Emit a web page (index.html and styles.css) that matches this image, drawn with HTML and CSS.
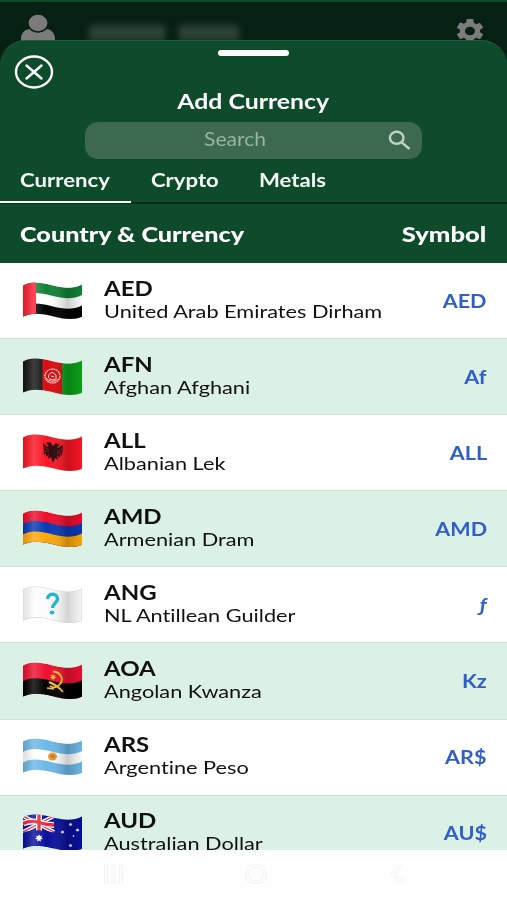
FILE: index.html
```html
<!DOCTYPE html>
<html lang="en">
<head>
  <meta charset="UTF-8" />
  <meta name="viewport" content="width=device-width, initial-scale=1.0"/>
  <title>Add Currency</title>
  <link rel="stylesheet" href="styles.css">
</head>
<body>
  <!-- shared flag shapes -->
  <svg class="defs" width="0" height="0">
    <defs>
      <path id="wave" d="M-1 4 L0 3.5 C7 -1 17 0 29 3.2 S50 7 59 2.5 V60 H-1 Z"/>
      <clipPath id="flag">
        <path d="M0 3.5 C7 -1 17 0 29 3.2 S50 7 59 2.5 V34.8 C50 38.5 41 37 29 34 S7 30.5 0 34.6 Z"/>
      </clipPath>
      <linearGradient id="shade">
        <stop offset="0" stop-color="#000" stop-opacity=".12"/>
        <stop offset=".18" stop-color="#fff" stop-opacity=".18"/>
        <stop offset=".4" stop-color="#fff" stop-opacity="0"/>
        <stop offset=".75" stop-color="#000" stop-opacity=".2"/>
        <stop offset="1" stop-color="#000" stop-opacity=".02"/>
      </linearGradient>
      <path id="star" d="M0 -4 L.9 -1.7 3.2 -2.5 2.1 -.4 4 1 1.6 1.3 1.7 3.7 0 2.2 -1.7 3.7 -1.6 1.3 -4 1 -2.1 -.4 -3.2 -2.5 -.9 -1.7 Z"/>
    </defs>
  </svg>

  <div class="phone">
    <header class="topbar">
      <svg class="user" viewBox="0 0 34 28" width="34" height="28">
        <path d="M0 28 V24 C0 18 4 14 9 14 C13 18 21 18 25 14 C30 14 34 18 34 24 V28 Z"/>
        <ellipse cx="17" cy="8" rx="10.2" ry="9" stroke="#062014" stroke-width="1.6"/>
      </svg>
      <div class="username"><i></i><i></i></div>
      <svg class="gear" viewBox="2 2 20 20" width="28" height="24" preserveAspectRatio="none">
        <path d="M19.14 12.94c.04-.3.06-.61.06-.94s-.02-.64-.07-.94l2.03-1.58a.49.49 0 0 0 .12-.61l-1.92-3.32a.49.49 0 0 0-.59-.22l-2.39.96a7 7 0 0 0-1.62-.94l-.36-2.54A.48.48 0 0 0 13.92 2h-3.84a.48.48 0 0 0-.47.41l-.36 2.54c-.59.24-1.13.57-1.62.94l-2.39-.96a.48.48 0 0 0-.59.22L2.74 8.87a.48.48 0 0 0 .12.61l2.03 1.58c-.05.3-.09.63-.09.94s.02.64.07.94l-2.03 1.58a.49.49 0 0 0-.12.61l1.92 3.32c.12.22.37.29.59.22l2.39-.96c.5.38 1.03.7 1.62.94l.36 2.54c.05.24.24.41.48.41h3.84c.24 0 .44-.17.47-.41l.36-2.54c.59-.24 1.13-.56 1.62-.94l2.39.96c.22.08.47 0 .59-.22l1.92-3.32a.48.48 0 0 0-.12-.61zM12 15.6a3.6 3.6 0 1 1 0-7.2 3.6 3.6 0 0 1 0 7.2z"/>
      </svg>
    </header>

    <main class="sheet">
      <div class="handle"></div>
      <svg class="close" viewBox="0 0 40 34" width="40" height="34">
        <ellipse cx="20" cy="17" rx="18" ry="15.5"/>
        <path d="M12.5 10.5 L27.5 23.5 M27.5 10.5 L12.5 23.5"/>
      </svg>
      <h1><span>Add Currency</span></h1>

      <div class="search">
        <span class="placeholder">Search</span>
        <svg viewBox="0 0 24 21" width="24" height="21">
          <ellipse cx="8.7" cy="7.8" rx="6.8" ry="6"/>
          <path d="M13.7 12.3 L21.5 19"/>
        </svg>
      </div>

      <nav class="tabs">
        <a class="tab active"><span>Currency</span></a>
        <a class="tab"><span>Crypto</span></a>
        <a class="tab"><span>Metals</span></a>
      </nav>

      <div class="list-head">
        <span class="left">Country &amp; Currency</span>
        <span class="right">Symbol</span>
      </div>

      <div class="list">
        <div class="row">
          <svg class="flag" viewBox="0 0 59 38"><g clip-path="url(#flag)">
            <use href="#wave" fill="#118238"/>
            <use href="#wave" y="10.5" fill="#fff"/>
            <use href="#wave" y="21" fill="#000"/>
            <rect width="13" height="38" fill="#fb2235"/>
            <rect width="59" height="38" fill="url(#shade)"/>
          </g></svg>
          <div class="info"><b>AED</b><span>United Arab Emirates Dirham</span></div>
          <span class="symbol">AED</span>
        </div>
        <div class="row">
          <svg class="flag" viewBox="0 0 59 38"><g clip-path="url(#flag)">
            <rect width="20" height="38" fill="#141414"/>
            <rect x="19.5" width="20" height="38" fill="#d90b10"/>
            <rect x="39" width="20" height="38" fill="#0ca11a"/>
            <g fill="none" stroke="#fbd7d0">
              <ellipse cx="29.5" cy="18" rx="7.5" ry="7" stroke-width="1.2" stroke-dasharray="2 .5"/>
              <path d="M25.5 20 V17 L29 14 L33 17 V21 M26 21 L33 22 M28 18 L31 19 M23 20 Q28 26 36 21"/>
            </g>
            <rect width="59" height="38" fill="url(#shade)"/>
          </g></svg>
          <div class="info"><b>AFN</b><span>Afghan Afghani</span></div>
          <span class="symbol">Af</span>
        </div>
        <div class="row">
          <svg class="flag" viewBox="0 0 59 38"><g clip-path="url(#flag)">
            <rect width="59" height="38" fill="#fa1624"/>
            <path d="M30 12 L27 8 L23 9 L26 12 L24 13 L20 9 L21 21 L23 19 L23 23 L26 20 L25 25 L28 23 L30 29 L32 24 L35 26 L34 21 L37 24 L37 20 L39 22 L40 11 L35 14 L34 13 L37 11 L33 9 Z" fill="#27070a"/>
            <path d="M21 13 L26 16 M21 17 L26 18 M39 15 L34 18 M39 19 L34 19" stroke="#d31320" stroke-width=".7"/>
            <rect width="59" height="38" fill="url(#shade)"/>
          </g></svg>
          <div class="info"><b>ALL</b><span>Albanian Lek</span></div>
          <span class="symbol">ALL</span>
        </div>
        <div class="row">
          <svg class="flag" viewBox="0 0 59 38"><g clip-path="url(#flag)">
            <use href="#wave" fill="#ed0d2c"/>
            <use href="#wave" y="10.5" fill="#0939b4"/>
            <use href="#wave" y="21" fill="#fda70b"/>
            <rect width="59" height="38" fill="url(#shade)"/>
          </g></svg>
          <div class="info"><b>AMD</b><span>Armenian Dram</span></div>
          <span class="symbol">AMD</span>
        </div>
        <div class="row">
          <svg class="flag" viewBox="0 0 59 38"><g clip-path="url(#flag)">
            <rect width="59" height="38" fill="#fcfcfd"/>
            <rect width="59" height="38" fill="url(#shade)" opacity=".8"/>
            <path d="M0 3.5 C7 -1 17 0 29 3.2 S50 7 59 2.5 V34.8 C50 38.5 41 37 29 34 S7 30.5 0 34.6 Z" fill="none" stroke="#cfcfd2"/>
            <path d="M24.5 13 C25 6.5 34.8 7 34.5 13 C34 17.5 29.8 17 29.5 22" fill="none" stroke="#25b5d2" stroke-width="3.4"/>
            <ellipse cx="29" cy="26.5" rx="2.4" ry="2" fill="#25b5d2"/>
          </g></svg>
          <div class="info"><b>ANG</b><span>NL Antillean Guilder</span></div>
          <span class="symbol"><em>ƒ</em></span>
        </div>
        <div class="row">
          <svg class="flag" viewBox="0 0 59 38"><g clip-path="url(#flag)">
            <use href="#wave" fill="#ec102f"/>
            <use href="#wave" y="15.8" fill="#000"/>
            <path d="M30 9.5 C38 10 41 17 37 22 C34 26 30 26 27 24 M26 20 C31 22 36 25 40 30" fill="none" stroke="#f5c32b" stroke-width="1.9"/>
            <use href="#star" transform="translate(30 15) scale(.8)" fill="#f5c32b"/>
            <path d="M24 26 L31 27" stroke="#f5c32b" stroke-width="1.5"/>
            <rect width="59" height="38" fill="url(#shade)"/>
          </g></svg>
          <div class="info"><b>AOA</b><span>Angolan Kwanza</span></div>
          <span class="symbol">Kz</span>
        </div>
        <div class="row">
          <svg class="flag" viewBox="0 0 59 38"><g clip-path="url(#flag)">
            <use href="#wave" fill="#6db8e8"/>
            <use href="#wave" y="10.5" fill="#fff"/>
            <use href="#wave" y="21" fill="#6db8e8"/>
            <ellipse cx="29.5" cy="18.5" rx="4.5" ry="4" fill="#e89a2c"/>
            <ellipse cx="29.5" cy="18.5" rx="2" ry="1.8" fill="#c9781b"/>
            <rect width="59" height="38" fill="url(#shade)"/>
          </g></svg>
          <div class="info"><b>ARS</b><span>Argentine Peso</span></div>
          <span class="symbol">AR$</span>
        </div>
        <div class="row">
          <svg class="flag" viewBox="0 0 59 38"><g clip-path="url(#flag)">
            <rect width="59" height="38" fill="#08109c"/>
            <path d="M0 2 L31 18 M31 2 L0 18" stroke="#fff" stroke-width="4"/>
            <path d="M0 2 L31 18 M31 2 L0 18" stroke="#ee2438" stroke-width="1.3"/>
            <path d="M16 0 V18 M0 9.5 Q8 6 16 8.5 T31 11" stroke="#fff" stroke-width="6" fill="none"/>
            <path d="M16 0 V18 M0 9.5 Q8 6 16 8.5 T31 11" stroke="#ee2438" stroke-width="3.3" fill="none"/>
            <path d="M0 19 Q9 14 31 18.5 V40 H0 Z" fill="#08109c"/>
            <g fill="#fff">
              <use href="#star" x="16" y="24"/>
              <use href="#star" transform="translate(39.5 18) scale(.5)"/>
              <use href="#star" transform="translate(47.5 10.5) scale(.5)"/>
              <use href="#star" transform="translate(54.5 16) scale(.5)"/>
              <use href="#star" transform="translate(50.5 22) scale(.3)"/>
              <use href="#star" transform="translate(47.5 31.5) scale(.5)"/>
            </g>
            <rect width="59" height="38" fill="url(#shade)"/>
          </g></svg>
          <div class="info"><b>AUD</b><span>Australian Dollar</span></div>
          <span class="symbol">AU$</span>
        </div>
      </div>
    </main>

    <footer class="sysnav">
      <svg viewBox="0 0 22 20" width="22" height="20"><path d="M1.5 1 H4.5 V19 H1.5Z M9 1 H12 V19 H9Z M16.5 1 H19.5 V19 H16.5Z"/></svg>
      <svg viewBox="0 0 22 20" width="22" height="20"><rect x="1" y="1" width="20" height="18" rx="6"/><rect x="4" y="3.5" width="14" height="13" rx="4"/></svg>
      <svg viewBox="0 0 22 20" width="22" height="20"><path d="M15 1 L4 10 L15 19 L17 17 L8 10 L17 3 Z"/></svg>
    </footer>
  </div>
</body>
</html>
```
FILE: styles.css
```css
* {
  box-sizing: border-box;
}
body {
  margin: 0;
  font-family: Lato, sans-serif;
  font-variant-ligatures: none;
  background: #fefefe;
  color: #111;
}
.defs {
  position: absolute;
}
.phone {
  width: 507px;
  height: 900px;
  display: flex;
  flex-direction: column;
  overflow: hidden;
  background: linear-gradient(#062014 100px, #fefefe 100px);
}

/* dimmed app bar behind the sheet */
.topbar {
  height: 40px;
  flex: none;
  display: flex;
  align-items: flex-start;
  border-top: 2px solid #0d492b;
  padding: 0 23px 0 21px;
  fill: #7b7b7b;
}
.user {
  margin-top: 13px;
  overflow: visible;
}
.username {
  display: flex;
  gap: 14px;
  margin: 23px auto 0 34px;
  filter: blur(3px);
}
.username i {
  height: 16px;
  width: 76px;
  background: #2c4236;
}
.username i + i {
  width: 60px;
}
.gear {
  margin-top: 17px;
}

.sheet {
  position: relative;
  height: 810px;
  flex: none;
  display: flex;
  flex-direction: column;
  background: #0d4b2a;
  border-top: 1px solid #245a3d;
  border-radius: 25px 25px 0 0;
  overflow: hidden;
}
.handle {
  width: 71px;
  height: 6px;
  margin: 9px auto 0 218px;
  border-radius: 3px;
  background: #fff;
  flex: none;
}
.close {
  position: absolute;
  left: 14px;
  top: 14px;
  fill: none;
  stroke: #fff;
  stroke-width: 2.4;
  stroke-linecap: round;
}
h1 {
  margin: 33px 0 0;
  font-size: 20px;
  line-height: 25px;
  text-align: center;
  color: #fff;
}
/* type is set wide across the whole screen */
h1 span, .placeholder, .tab span, .list-head span, .info b, .info span, .symbol {
  display: inline-block;
  white-space: nowrap;
  transform: scaleX(1.2);
}
h1 span {
  transform: scaleX(1.24);
}
.search {
  width: 337px;
  height: 37px;
  margin: 8px 0 0 85px;
  flex: none;
  display: flex;
  align-items: center;
  border-radius: 13px;
  background: #3c694f;
  padding-right: 10px;
}
.placeholder {
  margin-left: 119px;
  margin-right: auto;
  margin-bottom: 3px;
  font-size: 19px;
  line-height: 24px;
  color: #97b3a1;
  transform: scaleX(1.11);
  transform-origin: left;
}
.search svg {
  fill: none;
  stroke: #c0d2c7;
  stroke-width: 2.4;
}
.tabs {
  height: 45px;
  flex: none;
  display: flex;
  border-bottom: 2px solid #062d18;
}
.tab {
  height: 44px;
  padding: 9px 0 0 20px;
  width: 131px;
  font-size: 18px;
  line-height: 24px;
  font-weight: 700;
  color: #f5faf5;
}
.tab + .tab {
  width: 108px;
}
.tab.active {
  border-bottom: 2px solid #fff;
}
.tab span {
  transform: scaleX(1.23);
}
.tab span, .list-head .left {
  transform-origin: left;
}
.list-head {
  height: 59px;
  flex: none;
  display: flex;
  justify-content: space-between;
  align-items: center;
  padding: 0 21px 0 20px;
  font-size: 21px;
  font-weight: 900;
  color: #fff;
}
.list-head .right {
  transform: scaleX(1.22);
  transform-origin: right;
}

.list {
  flex: 1;
  overflow: hidden;
  background: #fff;
}
.row {
  height: 76.1px;
  display: flex;
  align-items: center;
  padding: 0 20px 0 23px;
  border-bottom: 1px solid #d5e2db;
  background: #fff;
}
.row:nth-child(even) {
  background: #dcf1e6;
}
.flag {
  width: 59px;
  height: 38px;
  flex: none;
}
.info {
  flex: 1;
  display: flex;
  flex-direction: column;
  align-items: flex-start;
  margin: 0 0 4px 22px;
}
.info b, .info span {
  transform-origin: left;
}
.info b {
  font-size: 20px;
  line-height: 24px;
}
.info span {
  font-size: 18px;
  line-height: 22px;
  transform: scaleX(1.207);
}
.symbol {
  transform-origin: right;
  font-size: 18px;
  font-weight: 700;
  color: #315fc9;
}

.sysnav {
  height: 50px;
  flex: none;
  display: flex;
  justify-content: space-between;
  align-items: center;
  padding: 0 99px 2px 103px;
  background: #fefefe;
  fill: none;
  stroke: #f2f2f2;
}
```
